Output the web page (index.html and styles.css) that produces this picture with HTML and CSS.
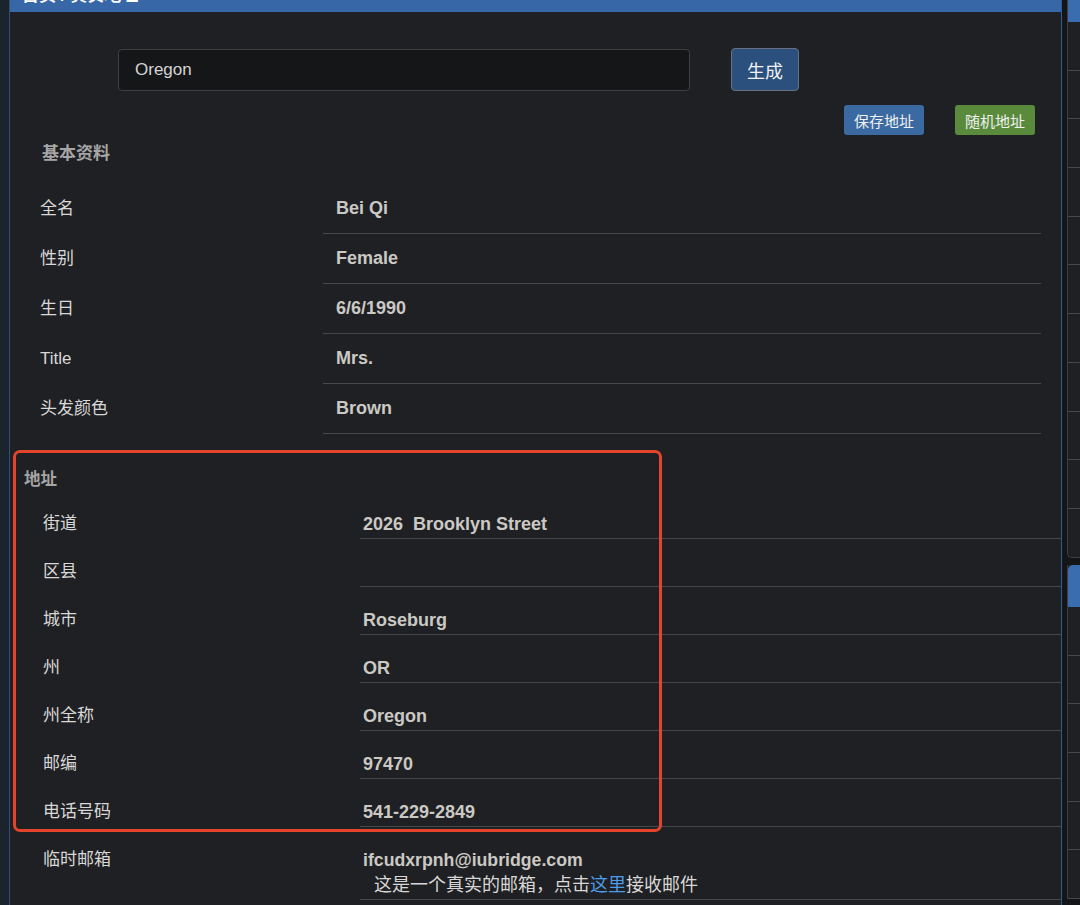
FILE: index.html
```html
<!DOCTYPE html>
<html lang="zh-CN">
<head>
<meta charset="utf-8">
<title>真实地址</title>
<link rel="stylesheet" href="styles.css">
</head>
<body>
<div class="page">
  <div class="gutter"></div>
  <main class="panel">
    <div class="panel-head"><span class="crumb">首页 / 真实地址</span></div>

    <div class="search">
      <div class="input">Oregon</div>
      <button class="btn-gen">生成</button>
    </div>

    <div class="actions">
      <button class="btn-sm btn-blue">保存地址</button>
      <button class="btn-sm btn-green">随机地址</button>
    </div>

    <div class="sec-title basic-title">基本资料</div>
    <div class="basic">
      <div class="b-label">全名</div><div class="b-value">Bei Qi</div>
      <div class="b-label">性别</div><div class="b-value">Female</div>
      <div class="b-label">生日</div><div class="b-value">6/6/1990</div>
      <div class="b-label">Title</div><div class="b-value">Mrs.</div>
      <div class="b-label">头发颜色</div><div class="b-value">Brown</div>
    </div>

    <div class="sec-title addr-title">地址</div>
    <div class="addr">
      <div class="a-label">街道</div><div class="a-value">2026&nbsp; Brooklyn Street</div>
      <div class="a-label">区县</div><div class="a-value"></div>
      <div class="a-label">城市</div><div class="a-value">Roseburg</div>
      <div class="a-label">州</div><div class="a-value">OR</div>
      <div class="a-label">州全称</div><div class="a-value">Oregon</div>
      <div class="a-label">邮编</div><div class="a-value">97470</div>
      <div class="a-label">电话号码</div><div class="a-value">541-229-2849</div>
      <div class="a-label">临时邮箱</div>
      <div class="a-value a-mail">
        <div class="mail-addr">ifcudxrpnh@iubridge.com</div>
        <div class="mail-note">这是一个真实的邮箱，点击<span class="link">这里</span>接收邮件</div>
      </div>
    </div>

    <div class="highlight"></div>
  </main>

  <aside class="side">
    <div class="side-card">
      <div class="side-head"></div>
      <div class="side-item"></div><div class="side-item"></div><div class="side-item"></div>
      <div class="side-item"></div><div class="side-item"></div><div class="side-item"></div>
      <div class="side-item"></div><div class="side-item"></div><div class="side-item"></div>
      <div class="side-item"></div><div class="side-item last"></div>
    </div>
    <div class="side-card2">
      <div class="side-head2"></div>
      <div class="side-item"></div><div class="side-item"></div><div class="side-item"></div>
      <div class="side-item"></div><div class="side-item"></div><div class="side-item"></div>
    </div>
  </aside>
</div>
</body>
</html>
```

FILE: styles.css
```css
html, body {
  margin: 0;
  padding: 0;
  background: #141518;
}
body {
  font-family: "Liberation Sans", "Noto Sans CJK SC", sans-serif;
  color: #d2d2d2;
}
.page {
  display: flex;
  height: 905px;
  overflow: hidden;
}
.gutter {
  width: 9px;
  flex: none;
  background: #1b232c;
}
.panel {
  position: relative;
  width: 1051px;
  flex: none;
  background: #1f2023;
  border-left: 1px solid #2e5078;
  border-right: 1px solid #2f5b8e;
}
.panel-head {
  height: 12px;
  background: #3767a6;
  overflow: hidden;
  display: flex;
  align-items: flex-end;
  padding-left: 12px;
}
.crumb {
  color: #ffffff;
  font-weight: bold;
  font-size: 17px;
  line-height: 17px;
  margin-bottom: 8px;
  white-space: nowrap;
}
.search {
  display: flex;
  align-items: center;
  margin-top: 36px;
  padding-left: 108px;
  gap: 41px;
}
.input {
  box-sizing: border-box;
  width: 572px;
  height: 42px;
  background: #151618;
  border: 1px solid #3e4043;
  border-radius: 4px;
  padding-left: 16px;
  font-size: 17px;
  line-height: 40px;
  color: #d4d4d4;
}
.btn-gen {
  box-sizing: border-box;
  width: 68px;
  height: 43px;
  background: #2c507d;
  border: 1px solid #65717e;
  border-radius: 4px;
  color: #f2f2f2;
  font-family: "Noto Sans CJK SC", sans-serif;
  font-size: 18px;
  padding: 0;
}
.actions {
  display: flex;
  justify-content: flex-end;
  gap: 31px;
  margin-top: 14px;
  padding-right: 26px;
}
.btn-sm {
  box-sizing: border-box;
  width: 80px;
  height: 30px;
  border: none;
  border-radius: 3px;
  color: #f0f0f0;
  font-family: "Noto Sans CJK SC", sans-serif;
  font-size: 15px;
  padding: 0;
}
.btn-blue { background: #3a6aa1; }
.btn-green { background: #5a8b3d; }

.sec-title {
  font-weight: bold;
  color: #a6a6a6;
  line-height: 24px;
}
.basic-title {
  margin-top: 7px;
  padding-left: 32px;
  font-size: 17px;
}
.basic {
  display: grid;
  grid-template-columns: 313px 718px;
  margin-top: 18px;
}
.b-label {
  height: 50px;
  line-height: 50px;
  padding-left: 30px;
  font-size: 17px;
  color: #d8d8d8;
}
.b-value {
  box-sizing: border-box;
  height: 50px;
  line-height: 49px;
  padding-left: 13px;
  border-bottom: 1px solid #46484b;
  font-size: 18px;
  font-weight: bold;
  color: #cbc9c4;
}
.addr-title {
  margin-top: 33px;
  padding-left: 14px;
  font-size: 16.5px;
}
.addr {
  display: grid;
  grid-template-columns: 350px 701px;
}
.a-label {
  padding: 22px 0 3px 33px;
  line-height: 22px;
  font-size: 17px;
  color: #d8d8d8;
}
.a-value {
  box-sizing: border-box;
  min-height: 48px;
  padding: 22px 0 3px 3px;
  line-height: 22px;
  border-bottom: 1px solid #46484b;
  font-size: 18px;
  font-weight: bold;
  color: #cbc9c4;
}
.a-mail {
  padding-bottom: 0;
}
.mail-addr {
  font-size: 17.7px;
}
.mail-note {
  font-weight: normal;
  font-size: 18px;
  line-height: 28px;
  padding-left: 11px;
  color: #d8d8d8;
}
.link {
  color: #4c9be8;
}
.highlight {
  position: absolute;
  left: 3px;
  top: 450px;
  width: 649px;
  height: 382px;
  box-sizing: border-box;
  border: 3px solid #e3442b;
  border-radius: 7px;
  pointer-events: none;
}

.side {
  margin-left: 5px;
  flex: 1;
  min-width: 0;
}
.side-card {
  box-sizing: border-box;
  height: 558px;
  background: #1f2023;
  border-left: 1px solid #3c3e42;
  border-bottom: 1px solid #3c3e42;
  border-bottom-left-radius: 5px;
  overflow: hidden;
}
.side-head {
  height: 22px;
  background: #3a6cb0;
}
.side-item {
  box-sizing: border-box;
  height: 48.7px;
  border-bottom: 1px solid #46484b;
}
.side-item.last {
  border-bottom: none;
}
.side-card2 {
  margin-top: 7px;
  background: #1f2023;
  border-left: 1px solid #3c3e42;
}
.side-head2 {
  height: 42px;
  background: #3a6cb0;
  border-top-left-radius: 5px;
}
```
